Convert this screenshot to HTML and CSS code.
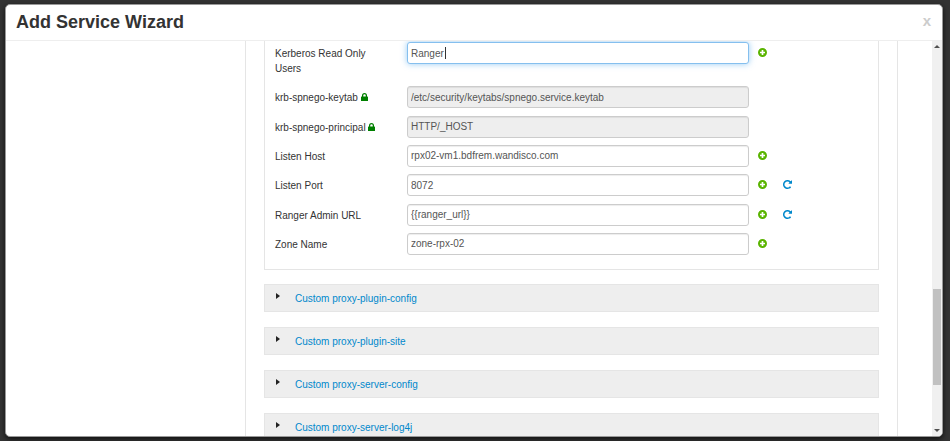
FILE: index.html
```html
<!DOCTYPE html>
<html lang="en">
	<head>
		<title>Add Service Wizard</title>
		<meta charset="UTF-8">
		<link rel="stylesheet" href="styles.css">
	</head>
	<body>
		<svg class="sprite" aria-hidden="true">
			<symbol id="icon-plus" viewBox="0 0 16 16">
				<path fill-rule="evenodd" d="M8 0a8 8 0 1 1 0 16A8 8 0 0 1 8 0zM6.500 3.500v3h-3v3h3v3h3v-3h3v-3h-3v-3z"/>
			</symbol>
			<symbol id="icon-repeat" viewBox="0 128 1536 1536">
				<path d="M1536 256v448q0 26-19 45t-45 19h-448q-42 0-59-40-17-39 14-69l138-138q-148-137-349-137-104 0-198.500 40.500t-163.500 109.500-109.500 163.500-40.500 198.500 40.500 198.500 109.500 163.500 163.500 109.500 198.500 40.500q119 0 225-52t179-147q7-10 23-12 15 0 25 9l137 138q9 8 9.500 20.500t-7.500 22.500q-109 132-264 204.500t-327 72.500q-156 0-298-61t-245-164-164-245-61-298 61-298 164-245 245-164 298-61q147 0 284.500 55.500t244.500 156.500l130-129q29-31 70-14 39 17 39 59z"/>
			</symbol>
			<symbol id="icon-lock" viewBox="0 0 14 16">
				<path fill-rule="evenodd" d="M2 7V5a5 5 0 0 1 10 0v2h1a1 1 0 0 1 1 1v7a1 1 0 0 1-1 1H1a1 1 0 0 1-1-1V8a1 1 0 0 1 1-1zM4.500 7h5V5a2.500 2.500 0 0 0-5 0z"/>
			</symbol>
		</svg>

		<div class="modal">
			<div class="modal-header">
				<h1>Add Service Wizard</h1>
				<button type="button" class="close">x</button>
			</div>
			<div class="modal-body">
				<div class="wizard-nav"></div>
				<div class="wizard-content">
					<form class="panel">
						<div class="row">
							<label for="krb-users">Kerberos Read Only Users</label>
							<div class="control">
								<input type="text" id="krb-users" class="focused" value="Ranger">
								<span class="caret"></span>
							</div>
							<div class="actions">
								<button type="button" class="add" aria-label="Add"><svg><use href="#icon-plus"/></svg></button>
							</div>
						</div>
						<div class="row">
							<label for="krb-keytab">krb-spnego-keytab <svg class="lock"><use href="#icon-lock"/></svg></label>
							<div class="control"><input type="text" id="krb-keytab" value="/etc/security/keytabs/spnego.service.keytab" disabled></div>
						</div>
						<div class="row">
							<label for="krb-principal">krb-spnego-principal <svg class="lock"><use href="#icon-lock"/></svg></label>
							<div class="control"><input type="text" id="krb-principal" value="HTTP/_HOST" disabled></div>
						</div>
						<div class="row">
							<label for="listen-host">Listen Host</label>
							<div class="control"><input type="text" id="listen-host" value="rpx02-vm1.bdfrem.wandisco.com"></div>
							<div class="actions">
								<button type="button" class="add" aria-label="Add"><svg><use href="#icon-plus"/></svg></button>
							</div>
						</div>
						<div class="row">
							<label for="listen-port">Listen Port</label>
							<div class="control"><input type="text" id="listen-port" value="8072"></div>
							<div class="actions">
								<button type="button" class="add" aria-label="Add"><svg><use href="#icon-plus"/></svg></button>
								<button type="button" class="reset" aria-label="Reset"><svg><use href="#icon-repeat"/></svg></button>
							</div>
						</div>
						<div class="row">
							<label for="ranger-url">Ranger Admin URL</label>
							<div class="control"><input type="text" id="ranger-url" value="{{ranger_url}}"></div>
							<div class="actions">
								<button type="button" class="add" aria-label="Add"><svg><use href="#icon-plus"/></svg></button>
								<button type="button" class="reset" aria-label="Reset"><svg><use href="#icon-repeat"/></svg></button>
							</div>
						</div>
						<div class="row">
							<label for="zone-name">Zone Name</label>
							<div class="control"><input type="text" id="zone-name" value="zone-rpx-02"></div>
							<div class="actions">
								<button type="button" class="add" aria-label="Add"><svg><use href="#icon-plus"/></svg></button>
							</div>
						</div>
					</form>

					<div class="accordion"><i class="arrow"></i><a href="#">Custom proxy-plugin-config</a></div>
					<div class="accordion"><i class="arrow"></i><a href="#">Custom proxy-plugin-site</a></div>
					<div class="accordion"><i class="arrow"></i><a href="#">Custom proxy-server-config</a></div>
					<div class="accordion"><i class="arrow"></i><a href="#">Custom proxy-server-log4j</a></div>
				</div>
				<div class="gutter"></div>
				<div class="scrollbar">
					<i class="scroll-up"></i>
					<div class="track"><div class="thumb"></div></div>
					<i class="scroll-down"></i>
				</div>
			</div>
		</div>
	</body>
</html>
```
FILE: styles.css
```css
* {
	box-sizing: border-box;
}

body {
	margin: 0;
	height: 100vh;
	padding: 4px 7px 4px 5px;
	overflow: hidden;
	background: #333;
	font-family: "Liberation Sans", Arial, Helvetica, sans-serif;
	font-size: 10px;
	line-height: 15px;
	color: #333;
}

button {
	padding: 0;
	border: 0;
	background: none;
	cursor: pointer;
}

.sprite {
	display: none;
}

.modal {
	display: flex;
	flex-direction: column;
	height: 100%;
	overflow: hidden;
	background: #fff;
	border: 1px solid #999;
	border-radius: 5px;
	box-shadow: 0 2px 5px #111;
}

.modal-header {
	display: flex;
	justify-content: space-between;
	align-items: center;
	flex: none;
	height: 36px;
	padding: 0 11px 2px 10px;
	border-bottom: 1px solid #eee;
}

.modal-header h1 {
	margin: 0;
	font-size: 18px;
	line-height: 30px;
}

.close {
	margin-bottom: 2px;
	font-family: inherit;
	font-size: 15px;
	font-weight: bold;
	line-height: 15px;
	color: #ccc;
}

.modal-body {
	display: flex;
	flex: 1;
	min-height: 0;
	overflow: hidden;
}

.wizard-nav {
	flex: 0 0 239px;
}

.wizard-content {
	flex: 1;
	padding: 0 18px;
	border-left: 1px solid #e5e5e5;
	border-right: 1px solid #e5e5e5;
}

.gutter {
	flex: 0 0 34px;
}

/* config form */
.panel {
	display: flex;
	flex-direction: column;
	justify-content: space-between;
	min-height: 229px;
	padding: 1px 10px 14px;
	border: 1px solid #e5e5e5;
	border-top: 0;
}

.row {
	display: grid;
	grid-template-columns: 132px 1fr 119px;
	align-items: start;
}

.row label {
	padding: 4px 30px 3px 0;
}

.row:not(:first-child) label {
	padding-right: 0;
	white-space: nowrap;
}

.lock {
	width: 7px;
	height: 8px;
	fill: #008000;
}

.control {
	position: relative;
}

.control input {
	display: block;
	width: 100%;
	height: 22px;
	padding: 0 3px;
	border: 1px solid #ccc;
	border-radius: 3px;
	background: #fff;
	font-family: inherit;
	font-size: 10px;
	color: #555;
	outline: 0;
	box-shadow: inset 0 1px 1px rgba(0, 0, 0, 0.075);
}

.control input:disabled {
	background: #eee;
}

.control input.focused {
	border-color: #85bfee;
	box-shadow: 0 0 6px rgba(82, 168, 236, 0.6);
}

.caret {
	position: absolute;
	top: 5px;
	left: 38px;
	width: 1px;
	height: 12px;
	background: #333;
}

.actions {
	display: flex;
	gap: 16px;
	padding: 6px 9px;
}

.actions svg {
	display: block;
	width: 9px;
	height: 9px;
}

.add {
	fill: #5ab400;
}

.reset {
	fill: #0088cc;
}

/* collapsed sections */
.accordion {
	display: flex;
	align-items: center;
	height: 28px;
	margin-top: 15px;
	padding: 0 11px;
	background: #eee;
	border: 1px solid #e5e5e5;
}

.panel + .accordion {
	margin-top: 14px;
}

.accordion a {
	color: #0088cc;
	text-decoration: none;
}

.arrow {
	margin: 0 15px 5px 0;
	border: 3px solid transparent;
	border-left: 4px solid #222;
	border-right: 0;
}

.scrollbar {
	display: flex;
	flex-direction: column;
	align-items: center;
	flex: 0 0 10px;
	padding: 4px 0;
	background: #f0f0f0;
}

.track {
	flex: 1;
	width: 8px;
	padding-top: 241px;
}

.thumb {
	height: 96px;
	background: #c1c1c1;
}

.scroll-up,
.scroll-down {
	border: 3px solid transparent;
}

.scroll-up {
	border-top: 0;
	border-bottom-color: #505050;
}

.scroll-down {
	border-bottom: 0;
	border-top-color: #505050;
}
```
